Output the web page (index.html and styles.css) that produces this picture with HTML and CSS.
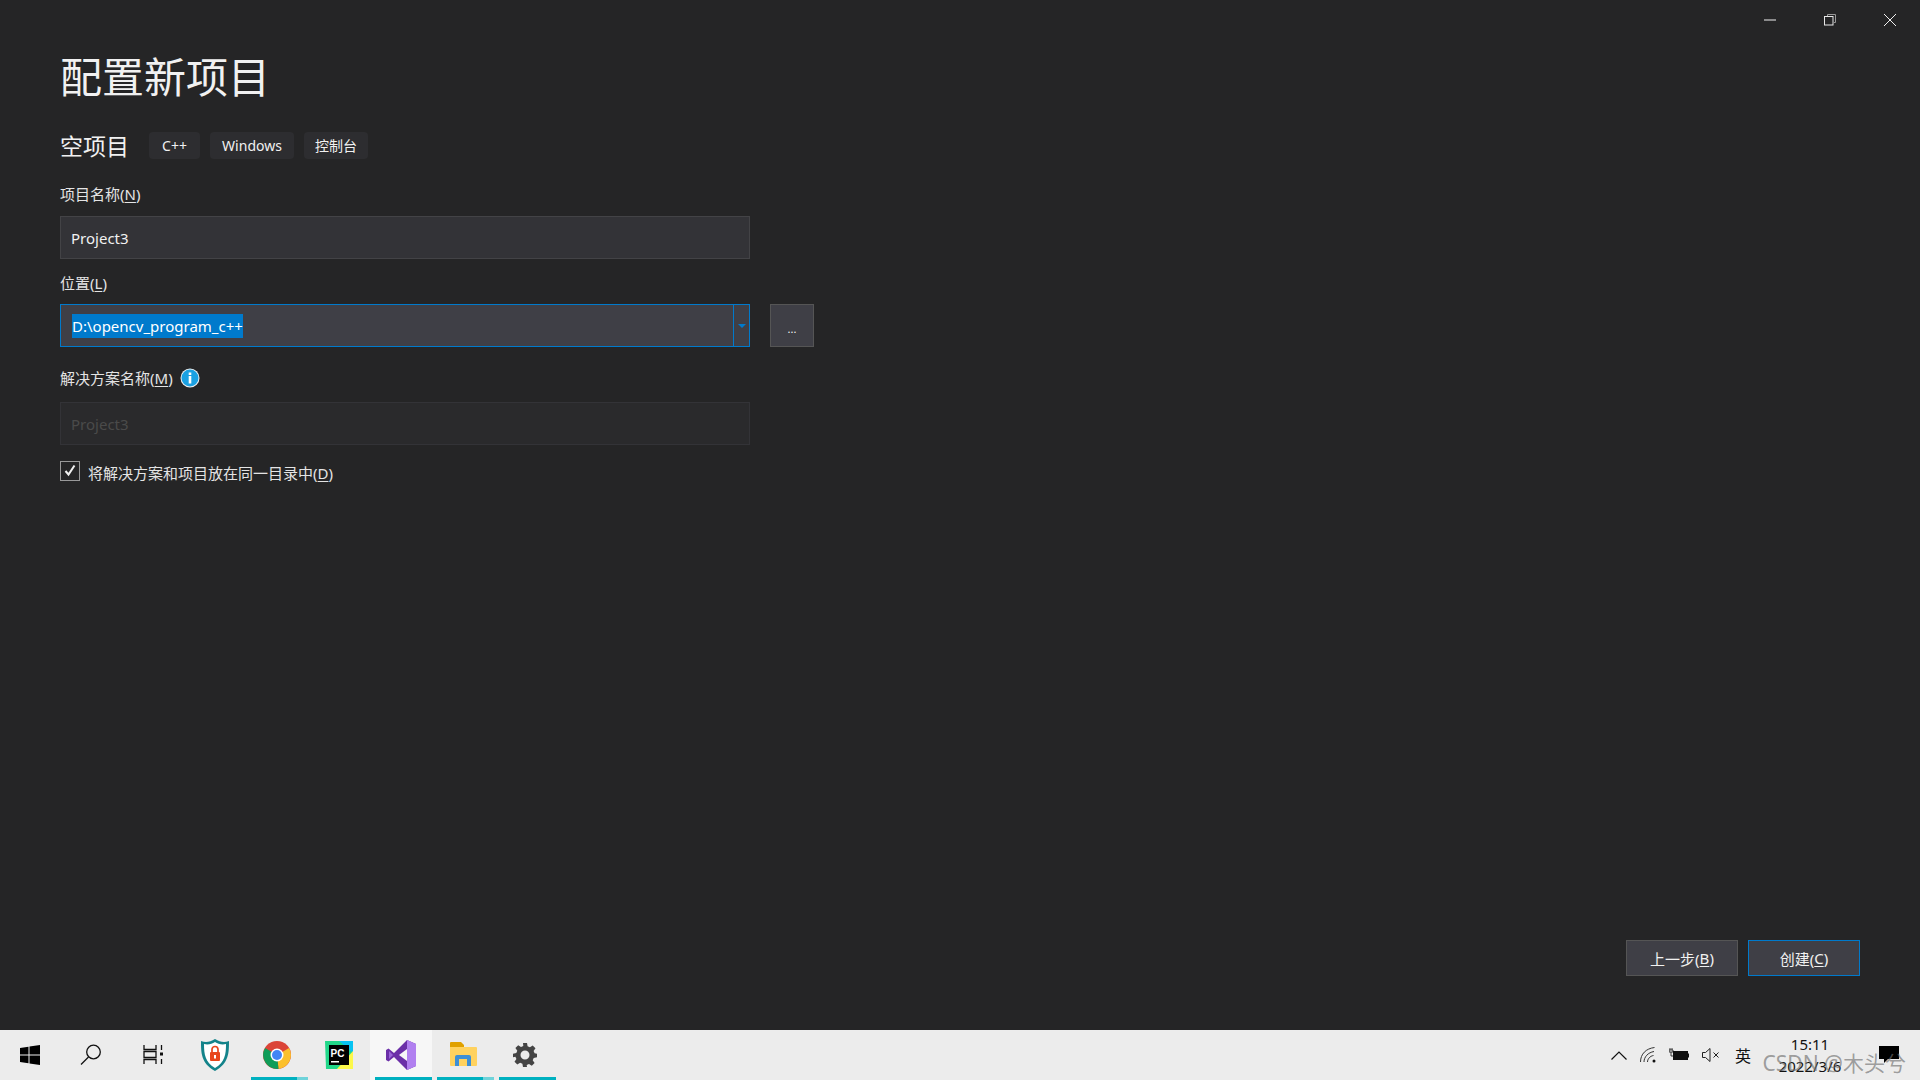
FILE: index.html
```html
<!DOCTYPE html>
<html lang="zh-CN">
  <head>
    <meta charset="UTF-8" />
    <title>配置新项目</title>
    <link rel="stylesheet" href="styles.css">
  </head>
  <body>
    <div class="window">
      <div class="caption">
        <span class="caption-btn">
          <svg width="14" height="14" viewBox="0 0 14 14"><path d="M1 7h12" stroke="#f0f0f0" stroke-width="1" /></svg>
        </span>
        <span class="caption-btn">
          <svg width="14" height="14" viewBox="0 0 14 14" fill="none" stroke="#e8e8e8"><path d="M4.5 3V1.5h8v8H11" stroke="#999" /><rect x="1.5" y="3.5" width="8.500" height="8.500" /></svg>
        </span>
        <span class="caption-btn">
          <svg width="14" height="14" viewBox="0 0 14 14"><path d="M1 1l12 12M13 1L1 13" stroke="#f0f0f0" stroke-width="1" /></svg>
        </span>
      </div>

      <div class="form">
        <h1>配置新项目</h1>

        <div class="subhead">
          <h2>空项目</h2>
          <span class="tag tag-cpp">C++</span>
          <span class="tag tag-win">Windows</span>
          <span class="tag tag-cn">控制台</span>
        </div>

        <div class="label label-name">项目名称(<u>N</u>)</div>
        <div class="input">Project3</div>

        <div class="label label-loc">位置(<u>L</u>)</div>
        <div class="loc-row">
          <div class="input input-focus">
            <span class="loc-text"><span class="selected">D:\opencv_program_c++</span></span>
            <span class="combo-btn">
              <svg width="8" height="4" viewBox="0 0 8 4"><path d="M0 0h8L4 4z" fill="#007acc" /></svg>
            </span>
          </div>
          <div class="browse">...</div>
        </div>

        <div class="label label-sln">
          解决方案名称(<u>M</u>)
          <svg class="info" width="20" height="20" viewBox="0 0 20 20">
            <circle cx="10" cy="10" r="9.500" fill="#f0f0f0" />
            <circle cx="10" cy="10" r="8.500" fill="#1ba1e2" />
            <rect x="8.700" y="8" width="2.600" height="7.500" fill="#fff" />
            <rect x="8.700" y="4.500" width="2.600" height="2.500" fill="#fff" />
          </svg>
        </div>
        <div class="input input-disabled">Project3</div>

        <div class="check-row">
          <span class="checkbox">
            <svg width="14" height="14" viewBox="0 0 14 14"><path d="M2.500 7l3 3.500L11.500 1.500" fill="none" stroke="#f0f0f0" stroke-width="2" /></svg>
          </span>
          <span class="check-label">将解决方案和项目放在同一目录中(<u>D</u>)</span>
        </div>
      </div>

      <div class="footer">
        <div class="btn">上一步(<u>B</u>)</div>
        <div class="btn btn-primary">创建(<u>C</u>)</div>
      </div>
    </div>

    <div class="taskbar">
      <div class="task-icons">
        <span class="task task-start">
          <svg width="20" height="20" viewBox="0 0 20 20" fill="#000"><path d="M0 3l8.500-1.200v7.700H0zM9.500 1.600L20 0v9.500H9.500zM0 10.500h8.500v7.700L0 17zM9.500 10.500H20V20L9.500 18.400z" /></svg>
        </span>
        <span class="task">
          <svg width="22" height="22" viewBox="0 0 22 22" fill="none" stroke="#111" stroke-width="1.300"><circle cx="13.500" cy="8" r="6.800" /><path d="M8.500 13L1 20.500" /></svg>
        </span>
        <span class="task">
          <svg width="20" height="20" viewBox="0 0 20 20" fill="none" stroke="#111" stroke-width="1.300"><path d="M1 0v4.500h12V0M1 19v-4.500h12V19M1 6.500h12v6H1zM18.500 0v5M18.500 14v5" /><rect x="17" y="7.500" width="3" height="3" fill="#111" stroke="none" /></svg>
        </span>
        <span class="task">
          <svg width="30" height="32" viewBox="0 0 30 32">
            <path d="M1 2c5 2 9 1 14-2 5 3 9 4 14 2 0 12 0 22-14 30C1 24 1 14 1 2z" fill="#13838a" />
            <path d="M4 5c4 1 8 0 11-2 3 2 7 3 11 2 0 10-1 18-11 24C5 23 4 15 4 5z" fill="#fff" />
            <rect x="10" y="13" width="10" height="9" rx="1" fill="#e8461b" />
            <path d="M12 13v-2.500a3 3 0 0 1 6 0V13" fill="none" stroke="#e8461b" stroke-width="1.700" />
            <rect x="14" y="16" width="2" height="3.500" fill="#fff" />
          </svg>
        </span>
        <span class="task task-open">
          <svg width="28" height="28" viewBox="0 0 28 28">
            <circle cx="14" cy="14" r="14" fill="#db4437" />
            <path d="M14 14L26.100 7a14 14 0 0 1-10.600 20.900z" fill="#fbc02d" />
            <path d="M14 14l1.500 13.900A14 14 0 0 1 2.100 7z" fill="#0f9d58" />
            <circle cx="14" cy="14" r="6.500" fill="#fff" />
            <circle cx="14" cy="14" r="5" fill="#4285f4" />
          </svg>
          <i class="bar bar-split"></i>
        </span>
        <span class="task">
          <svg width="28" height="28" viewBox="0 0 28 28">
            <path d="M0 0h17l11 5v23H1z" fill="#21d789" />
            <path d="M14 0h14v12z" fill="#07c3f2" />
            <path d="M28 10v18H12z" fill="#fcf84a" />
            <rect x="4" y="4" width="20" height="20" fill="#000" />
            <rect x="6" y="20" width="8" height="1.500" fill="#fff" />
            <text class="pc" x="5.500" y="15.500">PC</text>
          </svg>
        </span>
        <span class="task task-active">
          <svg width="30" height="30" viewBox="0 0 30 30">
            <path d="M21 0l9 4v22l-9 4L8 17 2.500 21.500 0 20V10l2.500-1.500L8 13z" fill="#6b2fa8" />
            <path d="M21 0l9 4v22l-9 4z" fill="#b180f0" />
            <path d="M3 11v8l4-4z" fill="#9a63d8" />
            <path d="M21 9l-8 6 8 6z" fill="#f7f7f7" />
          </svg>
          <i class="bar"></i>
        </span>
        <span class="task task-open">
          <svg width="28" height="28" viewBox="0 0 28 28">
            <path d="M1 2a1 1 0 0 1 1-1h10l3 3v4H1z" fill="#e0a100" />
            <path d="M1 6h26a1 1 0 0 1 1 1v17a1 1 0 0 1-1 1H2a1 1 0 0 1-1-1z" fill="#ffd25f" />
            <path d="M6 25v-9a2 2 0 0 1 2-2h12a2 2 0 0 1 2 2v9h-4v-7h-8v7z" fill="#3d8fd6" />
          </svg>
          <i class="bar bar-split"></i>
        </span>
        <span class="task task-open">
          <svg width="24" height="24" viewBox="0 0 24 24" fill="#444">
            <path d="M10 0h4l.6 3.300 2.300 1 2.800-1.900 2.800 2.800-1.900 2.800 1 2.300L24 10.700v3.600l-3.300.6-1 2.300 1.900 2.800-2.800 2.800-2.800-1.900-2.300 1L14 24h-4l-.6-3.300-2.300-1-2.800 1.900-2.800-2.800 1.900-2.800-1-2.300L0 14.300v-3.600l3.300-.6 1-2.300-1.900-2.800 2.800-2.800 2.800 1.900 2.300-1zM12 7.500a4.500 4.500 0 1 0 0 9 4.500 4.500 0 0 0 0-9z" fill-rule="evenodd" />
          </svg>
          <i class="bar"></i>
        </span>
      </div>

      <div class="tray">
        <svg width="16" height="9" viewBox="0 0 16 9" fill="none" stroke="#111" stroke-width="1.200"><path d="M.5 8.500L8 1l7.500 7.500" /></svg>
        <svg class="tray-wifi" width="16" height="16" viewBox="0 0 16 16" fill="none" stroke="#333" stroke-width="1"><path d="M.5 15C.5 7 6 1.500 14.500.5M4 15c0-5 4-9.500 10-10.500M7.500 15c0-3 2.500-6 6-6.500" /><circle cx="14" cy="14" r="1.500" fill="#111" stroke="none" /></svg>
        <svg width="20" height="14" viewBox="0 0 20 14"><rect x="4" y="3" width="15" height="9" fill="#111" /><rect x="19" y="5.500" width="1" height="4" fill="#111" /><path d="M1 0v2M3 0v2M0 2h4v2H0zM2 4v4h2" stroke="#111" stroke-width=".800" fill="none" /></svg>
        <svg width="18" height="14" viewBox="0 0 18 14" fill="none" stroke="#222" stroke-width="1"><path d="M.5 4.500h3L8 .5v13l-4.500-4h-3zM11.500 4.500l5 5M16.500 4.500l-5 5" /></svg>
        <span class="tray-ime">英</span>
        <div class="clock">
          <span>15:11</span>
          <span>2022/3/6</span>
        </div>
        <svg class="notify" width="20" height="18" viewBox="0 0 20 18"><path d="M0 0h20v13H9l-4 4v-4H0z" fill="#000" /></svg>
      </div>
      <span class="watermark">CSDN @木头兮</span>
    </div>
  </body>
</html>
```

FILE: styles.css
```css
* {
  box-sizing: border-box;
}

body {
  margin: 0;
  width: 1920px;
  height: 1080px;
  overflow: hidden;
  background: #252526;
  color: #f1f1f1;
  font-family: "Noto Sans", "Noto Sans CJK SC", sans-serif;
  font-size: 15px;
  display: flex;
  flex-direction: column;
}

u {
  text-underline-offset: 2px;
}

.window {
  height: 1030px;
  display: flex;
  flex-direction: column;
}

.caption {
  height: 40px;
  display: flex;
  justify-content: flex-end;
}

.caption-btn {
  width: 60px;
  display: flex;
  align-items: center;
  justify-content: center;
}

.form {
  padding-left: 60px;
  width: 900px;
}

h1 {
  margin: 8px 0 0;
  font-size: 42px;
  font-weight: 400;
  line-height: 58px;
}

.subhead {
  margin-top: 25px;
  height: 28px;
  display: flex;
  align-items: center;
}

h2 {
  margin: 0 20px 0 0;
  font-size: 23px;
  font-weight: 400;
}

.tag {
  height: 27px;
  margin-right: 10px;
  border-radius: 4px;
  background: #2d2d30;
  font-size: 14px;
  display: flex;
  align-items: center;
  justify-content: center;
}

.tag-cpp {
  width: 51px;
}

.tag-win {
  width: 84px;
}

.tag-cn {
  width: 64px;
}

.label {
  font-size: 15px;
  line-height: 22px;
  color: #e4e4e4;
}

.label-name {
  margin-top: 24px;
  margin-bottom: 11px;
}

.label-loc {
  margin-top: 13px;
  margin-bottom: 10px;
}

.label-sln {
  margin-top: 20px;
  margin-bottom: 13px;
  display: flex;
  align-items: center;
}

.info {
  margin-left: 7px;
}

.input {
  width: 690px;
  height: 43px;
  padding-left: 10px;
  background: #333337;
  border: 1px solid #434346;
  font-size: 15px;
  display: flex;
  align-items: center;
}

.loc-row {
  display: flex;
  gap: 20px;
}

.input-focus {
  padding-left: 11px;
  padding-right: 0;
  background: #3f3f46;
  border-color: #007acc;
}

.loc-text {
  flex: 1;
}

.selected {
  background: #007acc;
  color: #fff;
  padding: 2px 0;
}

.combo-btn {
  width: 16px;
  height: 100%;
  border-left: 1px solid #007acc;
  display: flex;
  align-items: center;
  justify-content: center;
}

.browse {
  width: 44px;
  height: 43px;
  background: #3f3f46;
  border: 1px solid #555;
  font-size: 11px;
  display: flex;
  align-items: center;
  justify-content: center;
  padding-top: 6px;
}

.input-disabled {
  background: #2a2a2c;
  border-color: #333337;
  color: #4a4a4a;
}

.check-row {
  margin-top: 14px;
  display: flex;
  align-items: center;
}

.checkbox {
  width: 20px;
  height: 20px;
  border: 1px solid #999;
  display: flex;
  align-items: center;
  justify-content: center;
}

.check-label {
  margin-left: 8px;
  margin-top: 3px;
  color: #e4e4e4;
}

.footer {
  margin-top: auto;
  padding: 0 60px 54px 0;
  display: flex;
  justify-content: flex-end;
  gap: 10px;
}

.btn {
  width: 112px;
  height: 36px;
  background: #3f3f46;
  border: 1px solid #555;
  font-size: 15px;
  display: flex;
  align-items: center;
  justify-content: center;
}

.btn-primary {
  border-color: #007acc;
}

.taskbar {
  position: relative;
  height: 50px;
  background: #ececec;
  color: #111;
  display: flex;
  justify-content: space-between;
}

.task-icons {
  display: flex;
}

.task {
  position: relative;
  width: 62px;
  height: 50px;
  display: flex;
  align-items: center;
  justify-content: center;
}

.task-start {
  width: 60px;
}

.task-active {
  background: #f7f7f7;
}

.bar {
  position: absolute;
  left: 5px;
  right: 0;
  bottom: 0;
  height: 3px;
  background: #00b1c0;
}

.bar-split {
  right: 0;
  background: linear-gradient(90deg, #00b1c0 80%, #6fd3da 80%);
}

.pc {
  font-family: "Liberation Sans", sans-serif;
  font-size: 10px;
  font-weight: 700;
  fill: #fff;
}

.tray {
  padding-right: 12px;
  display: flex;
  align-items: center;
  gap: 13px;
}

.tray-ime {
  margin-left: 2px;
  font-size: 16px;
}

.clock {
  width: 84px;
  margin-left: 4px;
  margin-right: 14px;
  font-size: 15px;
  line-height: 22px;
  display: flex;
  flex-direction: column;
  align-items: center;
}

.notify {
  margin-right: 9px;
}

.watermark {
  position: absolute;
  right: 14px;
  bottom: 3px;
  font-size: 21px;
  color: rgba(110, 110, 110, 0.65);
}
```
